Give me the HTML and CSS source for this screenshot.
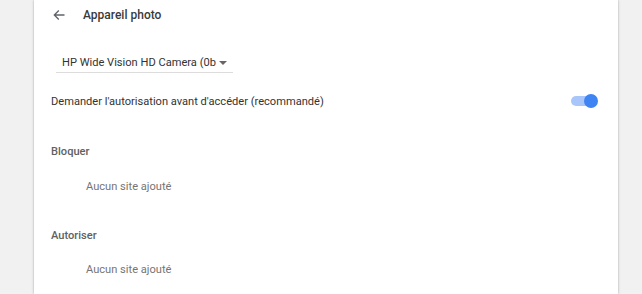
FILE: index.html
```html
<!DOCTYPE html>
<html lang="fr">
<head>
<meta charset="utf-8">
<link rel="stylesheet" href="styles.css">
</head>
<body>
<div class="card">
  <div class="header">
    <svg class="back" width="14" height="14" viewBox="0 0 14 14"><path d="M12.5 7H2.2M6.8 2.5L2.3 7l4.5 4.5" fill="none" stroke="#5f6368" stroke-width="1.3"/></svg>
    <span class="title">Appareil photo</span>
  </div>
  <div class="select">
    <span class="select-text">HP Wide Vision HD Camera (0b</span>
    <span class="caret"></span>
  </div>
  <div class="row toggle-row">
    <span class="label">Demander l'autorisation avant d'accéder (recommandé)</span>
    <span class="toggle"><span class="knob"></span></span>
  </div>
  <div class="row heading">Bloquer</div>
  <div class="row empty first">Aucun site ajouté</div>
  <div class="row heading second">Autoriser</div>
  <div class="row empty">Aucun site ajouté</div>
</div>
</body>
</html>
```
FILE: styles.css
```css
html, body {
  margin: 0;
  padding: 0;
  background: #f1f1f1;
  height: 100%;
  overflow: hidden;
}
body {
  font-family: Roboto, "Liberation Sans", sans-serif;
  font-size: 11.1px;
  color: #333;
}
.card {
  margin-left: 34px;
  width: 584px;
  height: 100%;
  background: #fff;
  box-shadow: 0 0 2px rgba(0,0,0,0.25), 0 0 4px rgba(0,0,0,0.08);
  padding: 0 20px 0 17px;
  box-sizing: border-box;
  display: flex;
  flex-direction: column;
}
.header {
  height: 30px;
  display: flex;
  align-items: center;
}
.back {
  margin-left: 1px;
  margin-right: 17px;
}
.title {
  font-size: 12px;
  font-weight: 500;
  color: #3a3a3a;
}
.select {
  margin-top: 24px;
  margin-left: 5px;
  width: 177px;
  height: 19px;
  box-sizing: border-box;
  border-bottom: 1px solid #dcdcdc;
  padding-left: 6px;
  display: flex;
  align-items: center;
  line-height: 18px;
}
.select-text {
  flex: 1;
  white-space: nowrap;
  overflow: hidden;
}
.caret {
  width: 0;
  height: 0;
  border-left: 4px solid transparent;
  border-right: 4px solid transparent;
  border-top: 4px solid #666;
  margin-right: 6px;
  margin-left: 2px;
}
.row {
  height: 34px;
  display: flex;
  align-items: center;
}
.toggle-row {
  margin-top: 11px;
  justify-content: space-between;
}
.toggle {
  position: relative;
  width: 24px;
  height: 10px;
  border-radius: 5px;
  background: #a9c6fa;
  margin-right: 3px;
}
.knob {
  position: absolute;
  right: -3px;
  top: -2px;
  width: 14px;
  height: 14px;
  border-radius: 50%;
  background: #3f84f3;
}
.heading {
  margin-top: 16px;
  font-weight: 500;
  color: #616161;
}
.heading.second {
  margin-top: 15px;
}
.empty {
  padding-left: 35px;
  color: #757575;
}
.empty.first {
  margin-top: 1px;
}
```
